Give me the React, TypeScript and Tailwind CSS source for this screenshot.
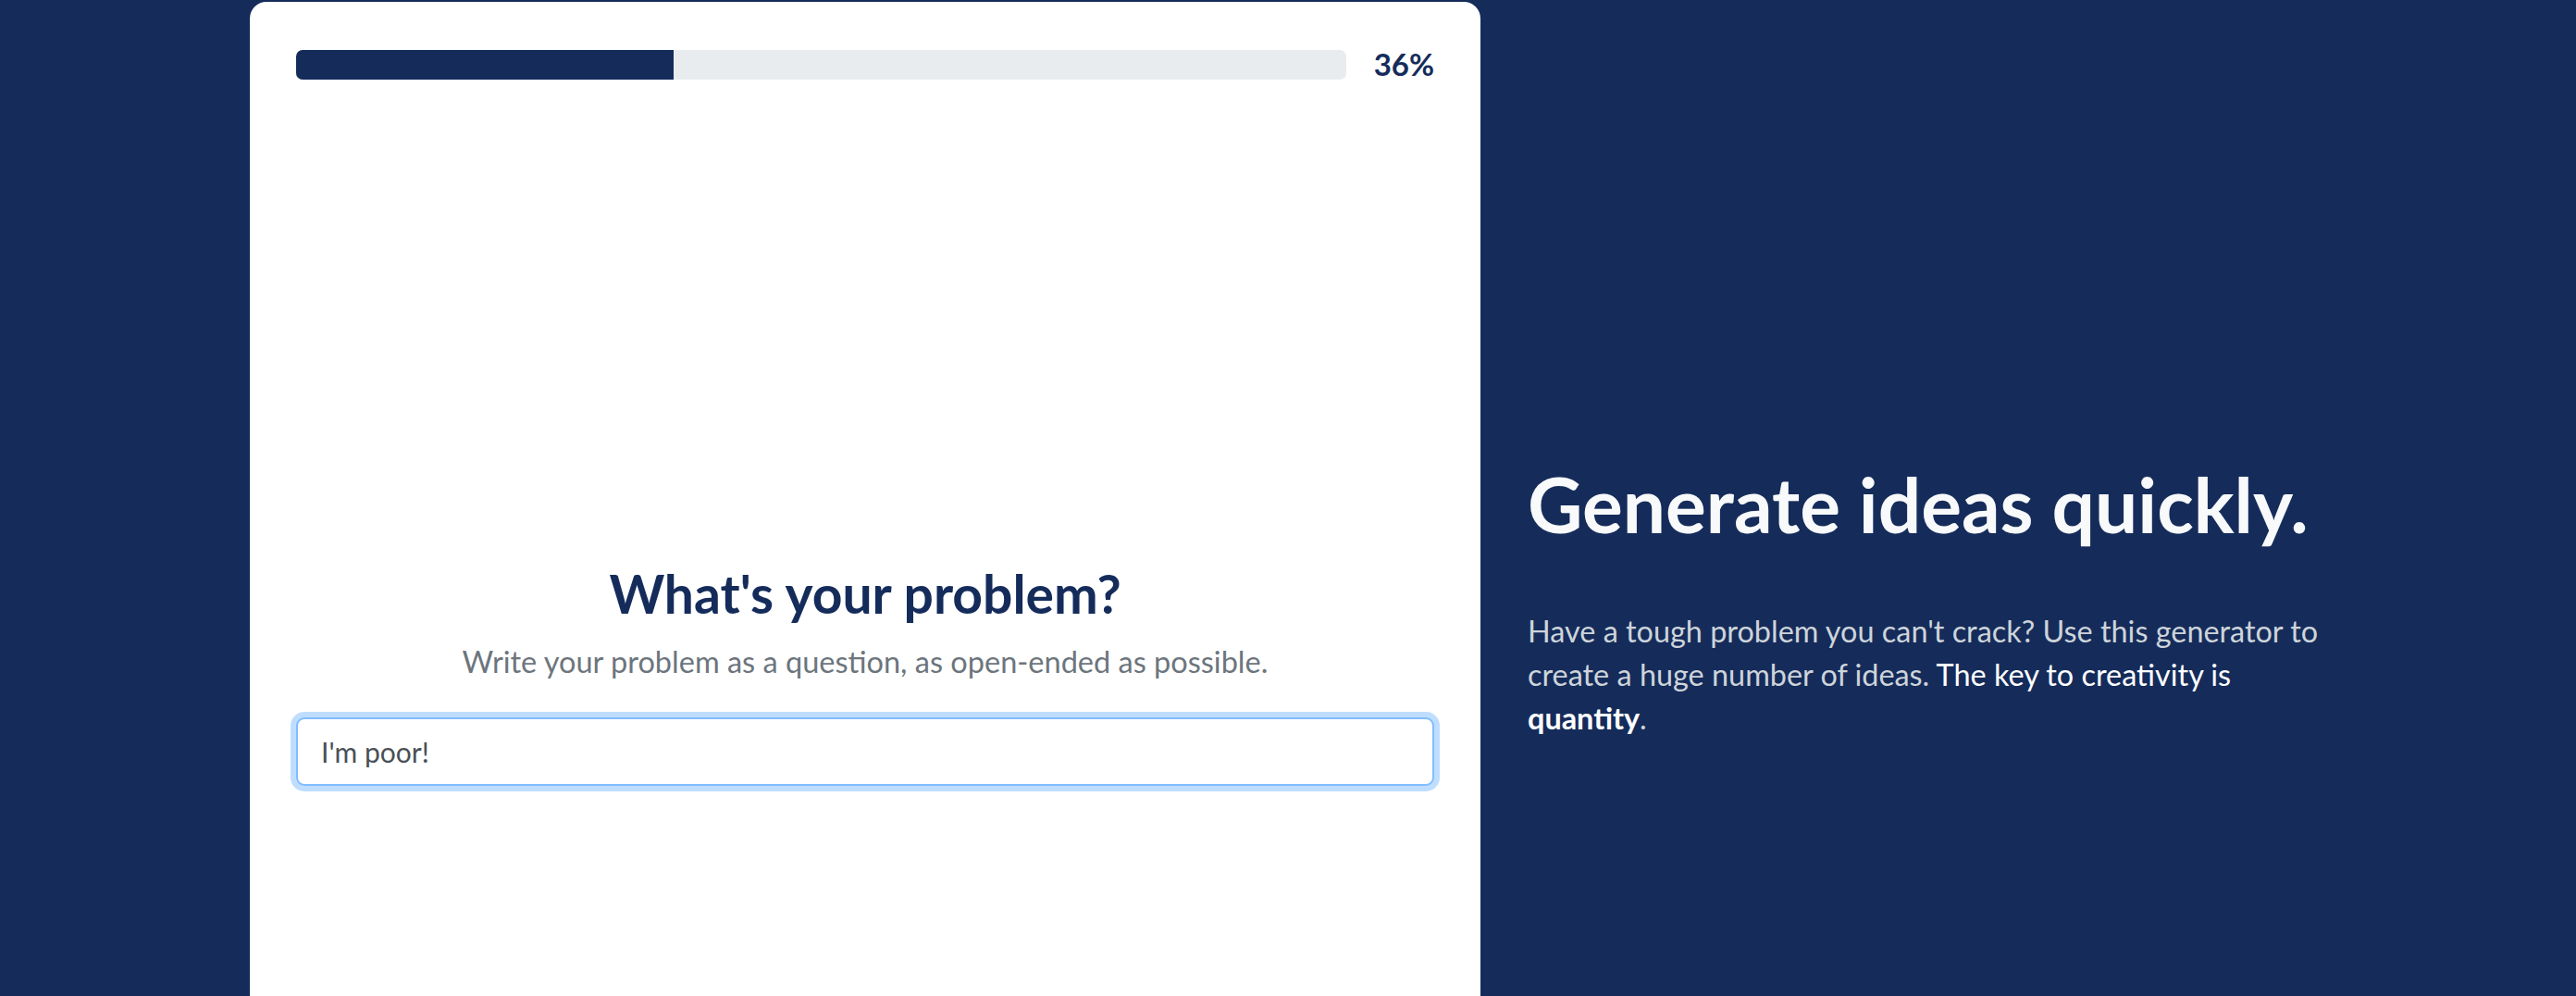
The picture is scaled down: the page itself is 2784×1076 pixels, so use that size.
export default function App() {
  const progress = 36

  return (
    <div className="flex h-screen w-full overflow-hidden bg-[#152c5b] pl-[270px] font-['Lato','Noto_Sans',sans-serif]">
      {/* Question card */}
      <div className="mt-[2px] flex h-[1200px] w-[1330px] shrink-0 flex-col rounded-t-[18px] bg-white px-[50px] pt-[51px]">
        <div className="flex items-center gap-[30px]">
          <div className="h-[32px] flex-1 overflow-hidden rounded-[7px] bg-[#e9ecef]">
            <div className="h-full bg-[#152c5b]" style={{ width: `${progress}%` }} />
          </div>
          <span className="text-[33px] font-bold leading-none text-[#152c5b]">{progress}%</span>
        </div>

        <div className="mt-[521px] flex flex-col items-center text-center">
          <h2 className="text-[57px] font-bold leading-[1.2] text-[#152c5b]">What's your problem?</h2>
          <p className="mt-[16px] text-[32.5px] leading-[1.45] text-[#6c757d]">
            Write your problem as a question, as open-ended as possible.
          </p>
          <input
            type="text"
            defaultValue="I'm poor!"
            className="mt-[36px] h-[74px] w-full rounded-[9px] border-2 border-[#80bdff] bg-white px-[25px] text-[30px] text-[#495057] shadow-[0_0_0_6px_rgba(0,123,255,0.25)] outline-none"
          />
        </div>
      </div>

      {/* Pitch */}
      <div className="w-[920px] shrink-0 pl-[51px] pt-[495px]">
        <h1 className="text-[82px] font-bold leading-[1.2] text-[#f8f9fa]">Generate ideas quickly.</h1>
        <p className="mt-[65px] w-[880px] text-[32.4px] leading-[47px] text-[#ced4da]">
          Have a tough problem you can't crack? Use this generator to create a huge number of ideas.{" "}
          <span className="text-white">
            The key to creativity is <strong className="font-bold">quantity</strong>
          </span>
          .
        </p>
      </div>
    </div>
  )
}
